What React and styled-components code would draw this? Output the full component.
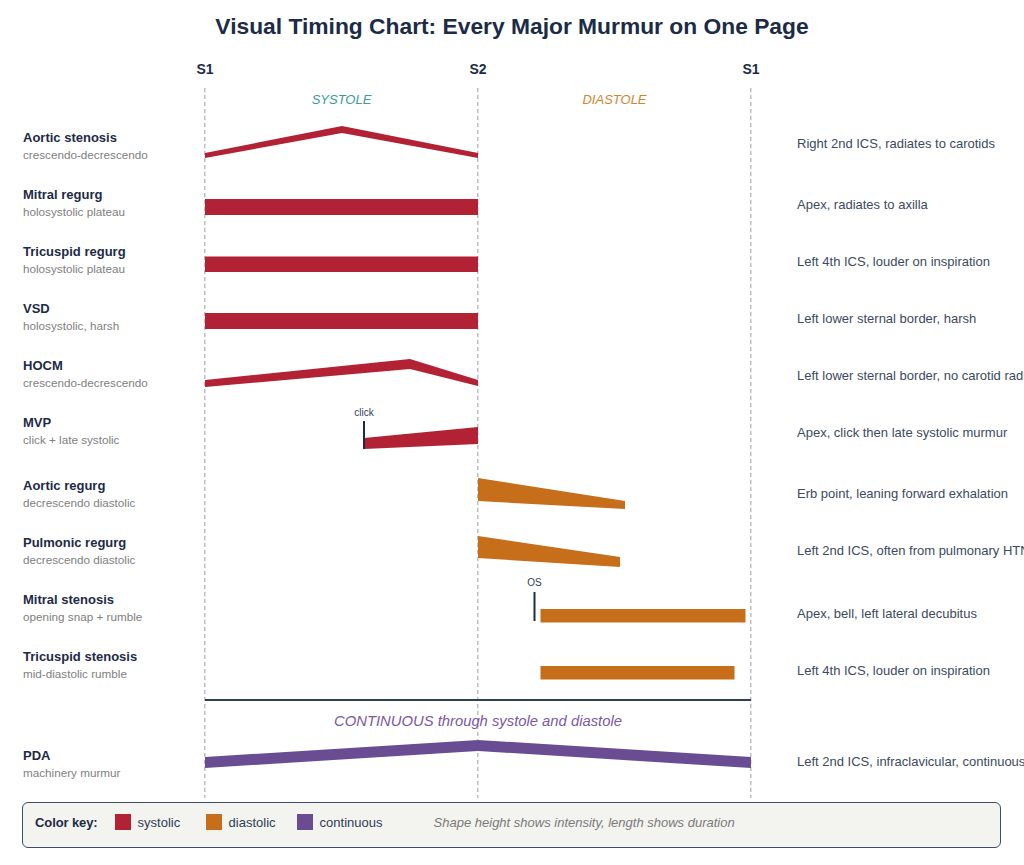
import React from "react";
import styled, { createGlobalStyle } from "styled-components";

const C = {
  navy: "#1c2b46",
  sys: "#b22234",
  dia: "#c76e1b",
  cont: "#6a4c93",
  grid: "#bdbdbd",
};

const GlobalStyle = createGlobalStyle`
  html, body { margin: 0; padding: 0; background: #ffffff; }
  body { font-family: "Liberation Sans", Arial, sans-serif; overflow: hidden; }
  * { box-sizing: border-box; }
`;

const Page = styled.div`
  width: 1024px;
  height: 865px;
  overflow: hidden;
  background: #fff;
`;

const Title = styled.h1`
  margin: 0;
  padding-top: 13px;
  font-size: 22.8px;
  line-height: 26px;
  font-weight: 700;
  text-align: center;
  color: ${C.navy};
`;

const Row = styled.div`
  display: grid;
  grid-template-columns: 205px 546px 1fr;
  height: ${(p) => p.$h}px;
`;

const TickCell = styled.div`
  display: flex;
  justify-content: space-between;
  margin: 0 -20px;
  padding-top: 22px;
`;

const Tick = styled.div`
  width: 40px;
  text-align: center;
  font-size: 14px;
  line-height: 16px;
  font-weight: 700;
  color: ${C.navy};
`;

const ChartBody = styled.div`
  display: flex;
  flex-direction: column;
  background-image:
    repeating-linear-gradient(to bottom, ${C.grid} 0 4px, transparent 4px 7px),
    repeating-linear-gradient(to bottom, ${C.grid} 0 4px, transparent 4px 7px),
    repeating-linear-gradient(to bottom, ${C.grid} 0 4px, transparent 4px 7px);
  background-size: 1.5px 100%;
  background-repeat: no-repeat;
  background-position: 204.25px 0, 477.25px 0, 750.25px 0;
`;

const PhaseCell = styled.div`
  display: grid;
  grid-template-columns: 1fr 1fr;
  padding-top: 4px;
`;

const Phase = styled.div`
  text-align: center;
  font-size: 13px;
  line-height: 16px;
  font-style: italic;
  color: ${(p) => p.$color};
`;

const LabelCell = styled.div`
  padding: 15px 0 0 23px;
`;

const Name = styled.div`
  font-size: 13px;
  line-height: 16px;
  font-weight: 700;
  color: ${C.navy};
  white-space: nowrap;
`;

const Sub = styled.div`
  margin-top: 2px;
  font-size: 11.7px;
  line-height: 14px;
  color: #808080;
  white-space: nowrap;
`;

const ChartCell = styled.div`
  position: relative;
  height: 100%;
`;

const Plot = styled.svg`
  display: block;
  overflow: visible;
`;

const Location = styled.div`
  padding: ${(p) => p.$top}px 0 0 46px;
  font-size: 13px;
  line-height: 16px;
  color: #3b4a5e;
  white-space: nowrap;
`;

const DividerCell = styled.div`
  display: flex;
  flex-direction: column;
  align-items: center;
`;

const DividerLine = styled.div`
  align-self: stretch;
  margin-top: 8px;
  height: 2px;
  background: #2e3f5a;
`;

const ContinuousLabel = styled.div`
  margin-top: 11px;
  font-size: 14.8px;
  line-height: 18px;
  font-style: italic;
  color: #7a58a6;
  white-space: nowrap;
`;

const Legend = styled.div`
  display: flex;
  align-items: center;
  width: 979px;
  height: 46px;
  margin: 4px 0 0 22px;
  padding: 0 12px 6px;
  background: #f3f3ef;
  border: 1.5px solid #3d4f66;
  border-radius: 6px;
`;

const LegendTitle = styled.div`
  font-size: 13px;
  font-weight: 700;
  color: ${C.navy};
  margin-right: 17px;
  letter-spacing: -0.1px;
`;

const LegendItem = styled.div`
  display: flex;
  align-items: center;
  width: 91px;
  flex: none;
`;

const Swatch = styled.span`
  width: 16px;
  height: 16px;
  background: ${(p) => p.$color};
  border: 1px solid ${(p) => p.$color}cc;
  flex: none;
`;

const LegendText = styled.span`
  margin-left: 7px;
  font-size: 13px;
  color: #2f3e55;
  white-space: nowrap;
`;

const Note = styled.div`
  margin-left: 46px;
  font-size: 13px;
  font-style: italic;
  color: #7a7a7a;
  white-space: nowrap;
`;

const pts = (arr) => arr.map((p) => p.join(",")).join(" ");

const rows = [
  {
    name: "Aortic stenosis",
    sub: "crescendo-decrescendo",
    loc: "Right 2nd ICS, radiates to carotids",
    h: 57,
    locTop: 20.5,
    color: C.sys,
    poly: [[0, 38], [137, 11], [273, 38], [273, 43], [137, 18], [0, 43]],
  },
  {
    name: "Mitral regurg",
    sub: "holosystolic plateau",
    loc: "Apex, radiates to axilla",
    h: 57,
    locTop: 24.5,
    color: C.sys,
    rect: [0, 27, 273, 16],
  },
  {
    name: "Tricuspid regurg",
    sub: "holosystolic plateau",
    loc: "Left 4th ICS, louder on inspiration",
    h: 57,
    locTop: 24.5,
    color: C.sys,
    rect: [0, 27.5, 273, 15.5],
  },
  {
    name: "VSD",
    sub: "holosystolic, harsh",
    loc: "Left lower sternal border, harsh",
    h: 57,
    locTop: 24.5,
    color: C.sys,
    rect: [0, 27, 273, 16],
  },
  {
    name: "HOCM",
    sub: "crescendo-decrescendo",
    loc: "Left lower sternal border, no carotid radiation",
    h: 57,
    locTop: 24.5,
    color: C.sys,
    poly: [[0, 37], [205, 16], [273, 37], [273, 43], [205, 26], [0, 44]],
  },
  {
    name: "MVP",
    sub: "click + late systolic",
    loc: "Apex, click then late systolic murmur",
    h: 63,
    locTop: 24.5,
    color: C.sys,
    marker: { x: 159, y1: 21, y2: 49, label: "click", ty: 15.7 },
    poly: [[159, 38], [273, 27], [273, 44], [159, 49]],
  },
  {
    name: "Aortic regurg",
    sub: "decrescendo diastolic",
    loc: "Erb point, leaning forward exhalation",
    h: 57,
    locTop: 23,
    color: C.dia,
    poly: [[273, 15], [420, 38], [420, 46], [273, 38]],
  },
  {
    name: "Pulmonic regurg",
    sub: "decrescendo diastolic",
    loc: "Left 2nd ICS, often from pulmonary HTN",
    h: 57,
    locTop: 23,
    color: C.dia,
    poly: [[273, 16], [415, 37], [415, 47], [273, 38]],
  },
  {
    name: "Mitral stenosis",
    sub: "opening snap + rumble",
    loc: "Apex, bell, left lateral decubitus",
    h: 57,
    locTop: 29,
    color: C.dia,
    marker: { x: 329.5, y1: 15, y2: 44, label: "OS", ty: 9 },
    rect: [335.5, 32, 205, 13.5],
  },
  {
    name: "Tricuspid stenosis",
    sub: "mid-diastolic rumble",
    loc: "Left 4th ICS, louder on inspiration",
    h: 57,
    locTop: 29,
    color: C.dia,
    rect: [335.5, 32, 194, 13.5],
  },
];

const pda = {
  name: "PDA",
  sub: "machinery murmur",
  loc: "Left 2nd ICS, infraclavicular, continuous",
  h: 65,
  locTop: 21,
  color: C.cont,
  poly: [[0, 24], [273, 7], [546, 24], [546, 35], [273, 18], [0, 35]],
};

function MurmurRow({ r }) {
  return (
    <Row $h={r.h}>
      <LabelCell>
        <Name>{r.name}</Name>
        <Sub>{r.sub}</Sub>
      </LabelCell>
      <ChartCell>
        <Plot width="546" height={r.h} viewBox={`0 0 546 ${r.h}`}>
          {r.poly && <polygon points={pts(r.poly)} fill={r.color} />}
          {r.rect && (
            <rect
              x={r.rect[0]}
              y={r.rect[1]}
              width={r.rect[2]}
              height={r.rect[3]}
              fill={r.color}
            />
          )}
          {r.marker && (
            <g>
              <line
                x1={r.marker.x}
                x2={r.marker.x}
                y1={r.marker.y1}
                y2={r.marker.y2}
                stroke={C.navy}
                strokeWidth="2"
              />
              <text
                x={r.marker.x}
                y={r.marker.ty}
                textAnchor="middle"
                fontSize="10"
                fontFamily='"Liberation Sans", Arial, sans-serif'
                fill="#2f3e55"
              >
                {r.marker.label}
              </text>
            </g>
          )}
        </Plot>
      </ChartCell>
      <Location $top={r.locTop}>{r.loc}</Location>
    </Row>
  );
}

export default function App() {
  return (
    <Page>
      <GlobalStyle />
      <Title>Visual Timing Chart: Every Major Murmur on One Page</Title>
      <Row $h={49}>
        <div />
        <TickCell>
          <Tick>S1</Tick>
          <Tick>S2</Tick>
          <Tick>S1</Tick>
        </TickCell>
        <div />
      </Row>
      <ChartBody>
        <Row $h={27}>
          <div />
          <PhaseCell>
            <Phase $color="#3a9a9c">SYSTOLE</Phase>
            <Phase $color="#d4832f">DIASTOLE</Phase>
          </PhaseCell>
          <div />
        </Row>
        {rows.map((r) => (
          <MurmurRow key={r.name} r={r} />
        ))}
        <Row $h={42}>
          <div />
          <DividerCell>
            <DividerLine />
            <ContinuousLabel>CONTINUOUS through systole and diastole</ContinuousLabel>
          </DividerCell>
          <div />
        </Row>
        <MurmurRow r={pda} />
      </ChartBody>
      <Legend>
        <LegendTitle>Color key:</LegendTitle>
        <LegendItem>
          <Swatch $color={C.sys} />
          <LegendText>systolic</LegendText>
        </LegendItem>
        <LegendItem>
          <Swatch $color={C.dia} />
          <LegendText>diastolic</LegendText>
        </LegendItem>
        <LegendItem>
          <Swatch $color={C.cont} />
          <LegendText>continuous</LegendText>
        </LegendItem>
        <Note>Shape height shows intensity, length shows duration</Note>
      </Legend>
    </Page>
  );
}
